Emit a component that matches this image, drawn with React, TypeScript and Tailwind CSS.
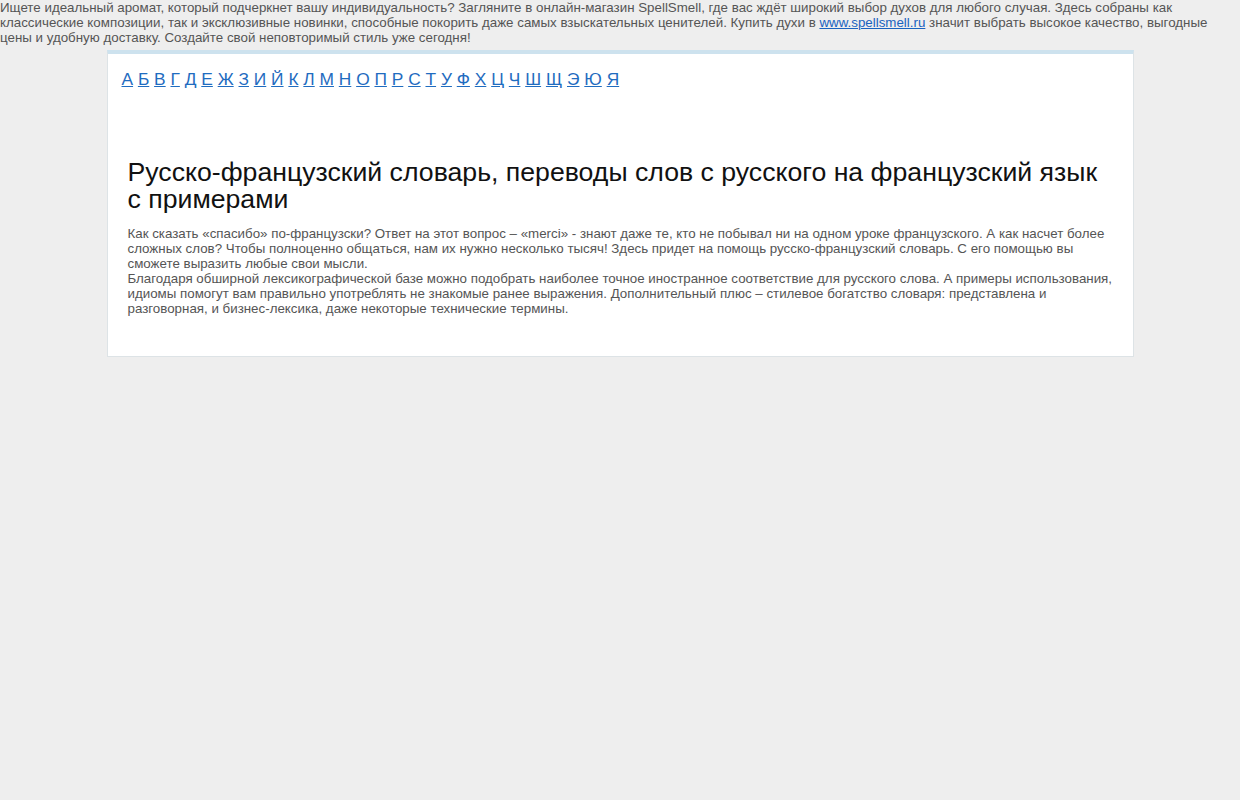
const letters = "А Б В Г Д Е Ж З И Й К Л М Н О П Р С Т У Ф Х Ц Ч Ш Щ Э Ю Я".split(" ");

export default function App() {
    return (
        <div className="min-h-[800px] bg-[#eeeeee] font-['Liberation_Sans',Arial,sans-serif] text-[13.33px] leading-[15px] text-[#555555]">
            <div>
                Ищете идеальный аромат, который подчеркнет вашу индивидуальность? Загляните в онлайн-магазин SpellSmell, где вас ждёт широкий выбор духов для любого случая. Здесь собраны как классические композиции, так и эксклюзивные новинки, способные покорить даже самых взыскательных ценителей. Купить духи в{" "}
                <a href="#" className="text-[#1a63c0] underline">www.spellsmell.ru</a>{" "}
                значит выбрать высокое качество, выгодные цены и удобную доставку. Создайте свой неповторимый стиль уже сегодня!
            </div>

            <div className="mx-auto mt-[5px] w-[1027px] border border-t-4 border-[#dde3e6] border-t-[#cde2ee] bg-white px-[14px] pt-[15px] pb-[40px]">
                <div className="text-[17.33px] leading-[20px]">
                    {letters.map((l, i) => (
                        <span key={l}>
                            <a href="#" className="text-[#1f6cc0] underline">{l}</a>
                            {i < letters.length - 1 ? " " : ""}
                        </span>
                    ))}
                </div>

                <div className="pl-[6px] pr-[5px] pt-[70px]">
                    <h1 className="text-[26.67px] leading-[27px] text-[#111111]">
                        Русско-французский словарь, переводы слов с русского на французский язык с примерами
                    </h1>
                    <p className="mt-[13px]">
                        Как сказать «спасибо» по-французски? Ответ на этот вопрос – «merci» - знают даже те, кто не побывал ни на одном уроке французского. А как насчет более сложных слов? Чтобы полноценно общаться, нам их нужно несколько тысяч! Здесь придет на помощь русско-французский словарь. С его помощью вы сможете выразить любые свои мысли.
                        <br />
                        Благодаря обширной лексикографической базе можно подобрать наиболее точное иностранное соответствие для русского слова. А примеры использования, идиомы помогут вам правильно употреблять не знакомые ранее выражения. Дополнительный плюс – стилевое богатство словаря: представлена и разговорная, и бизнес-лексика, даже некоторые технические термины.
                    </p>
                </div>
            </div>
        </div>
    );
}
